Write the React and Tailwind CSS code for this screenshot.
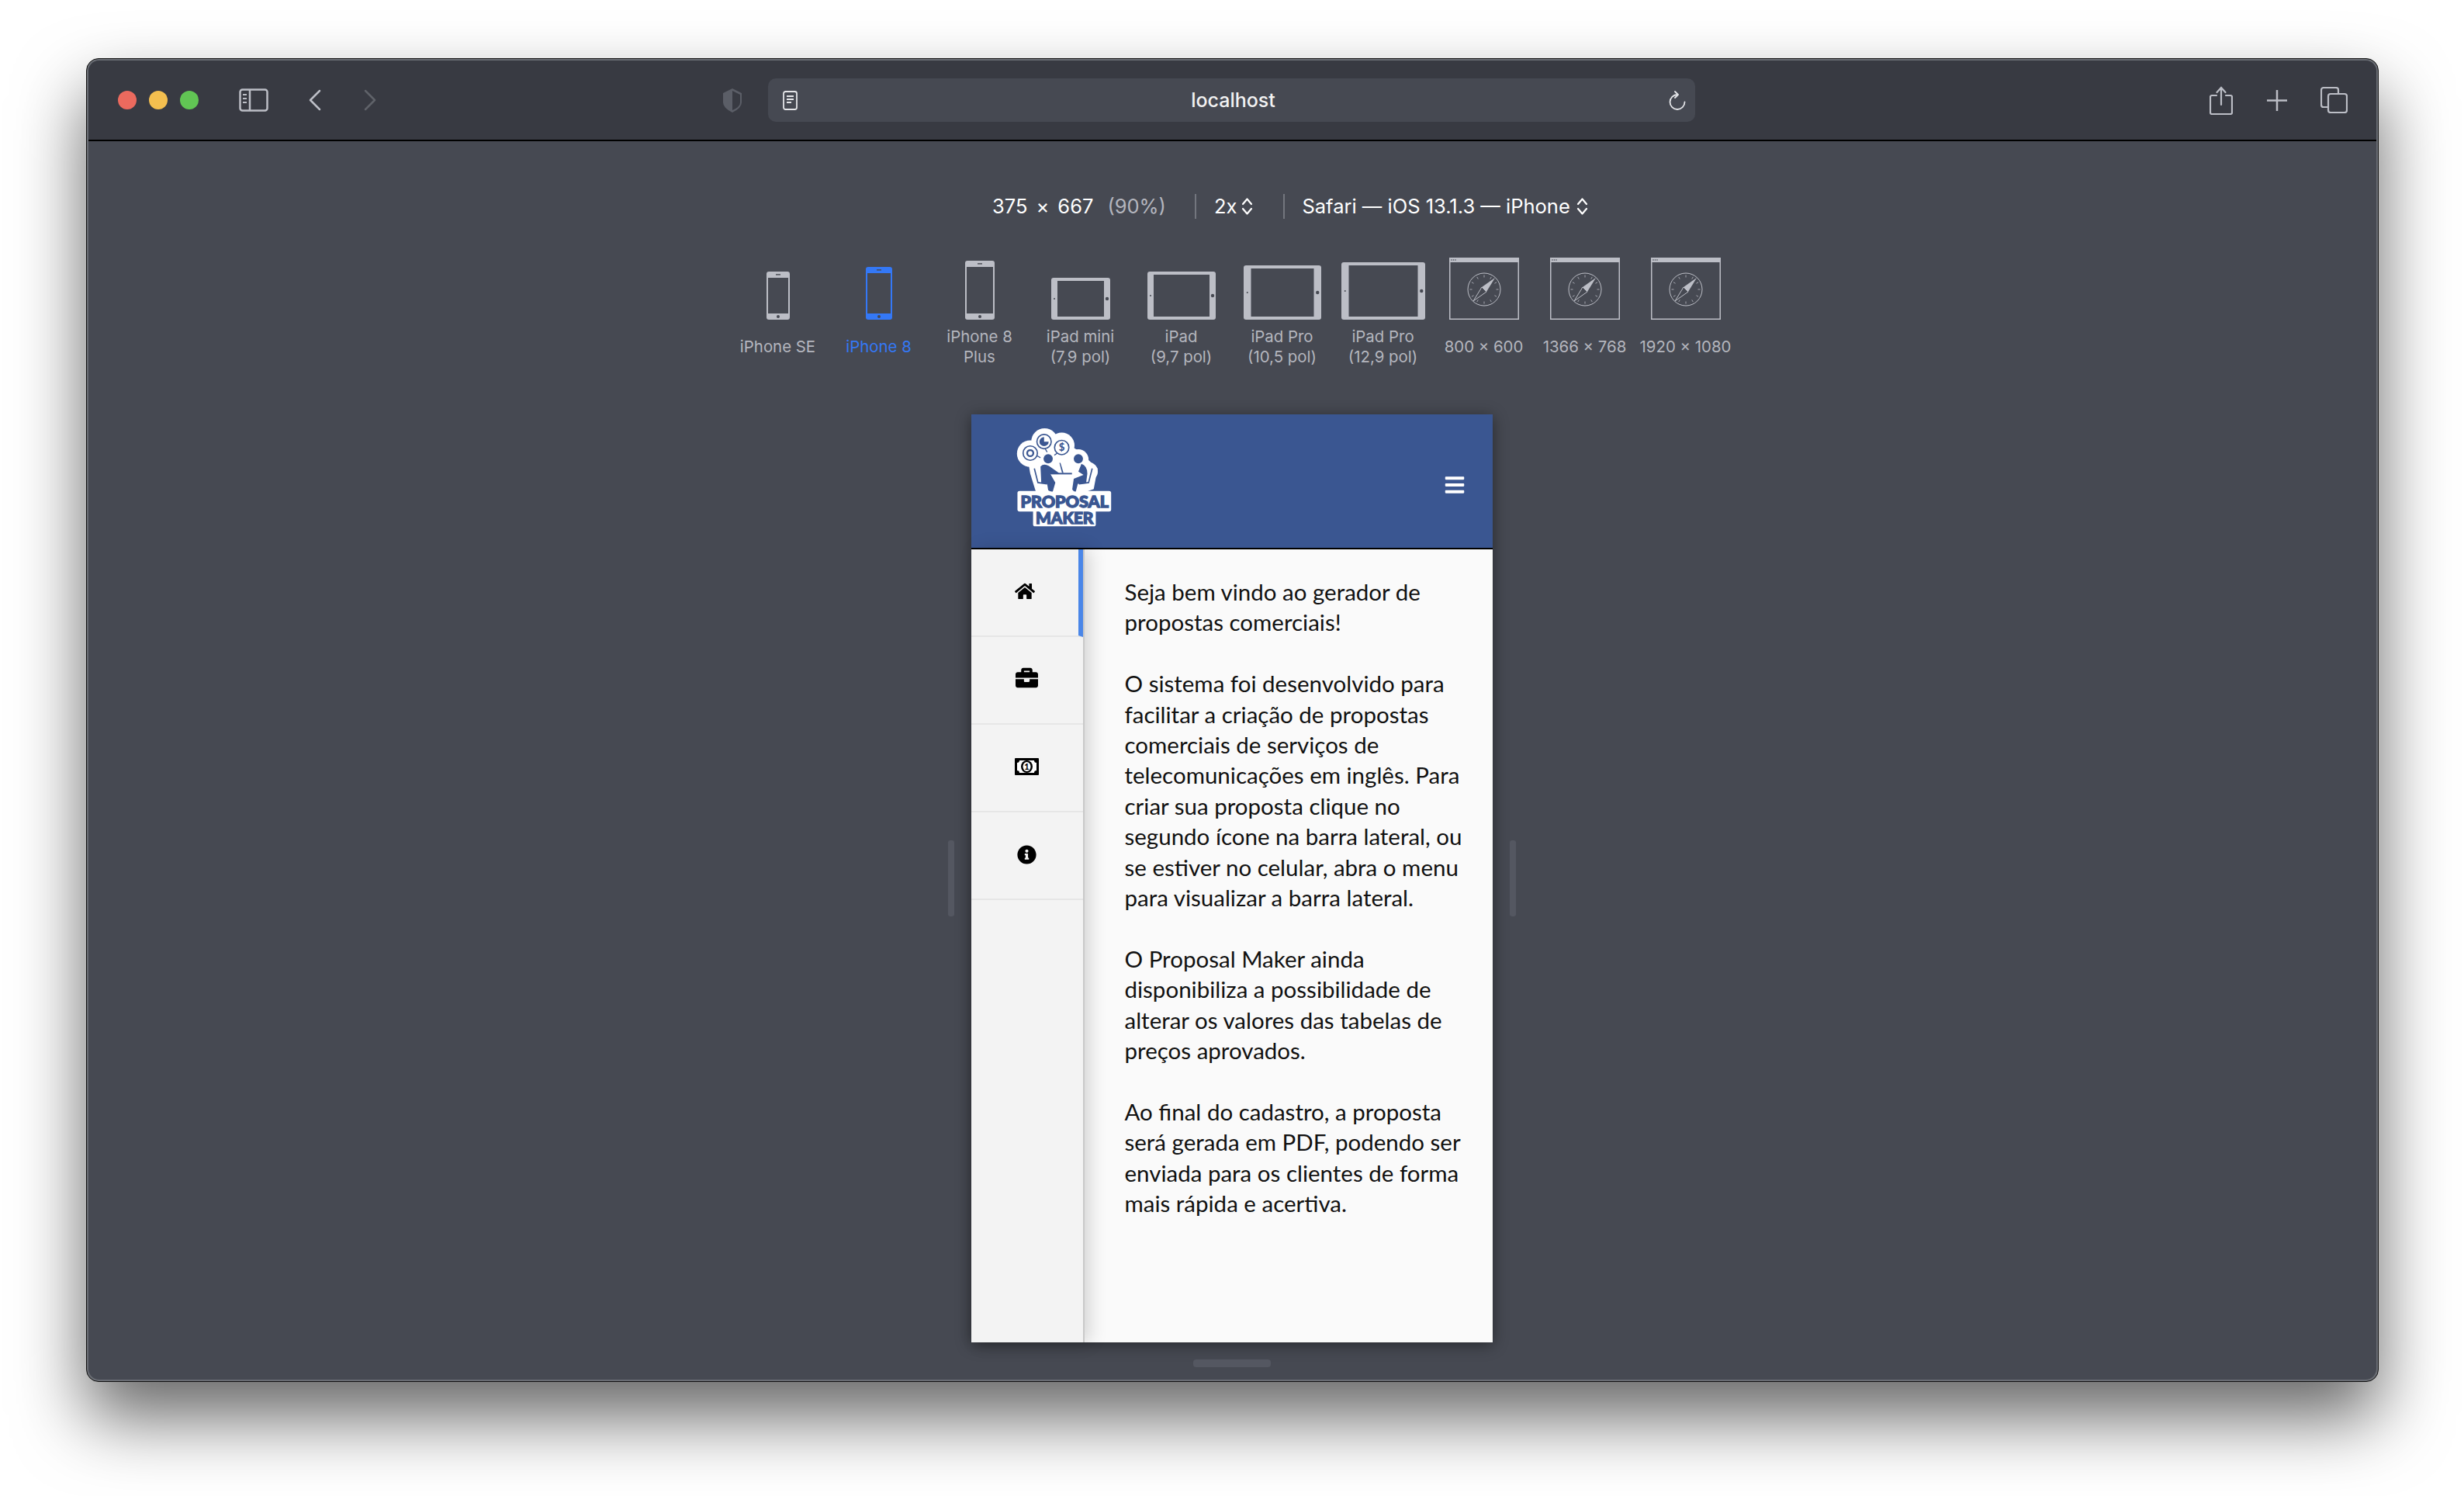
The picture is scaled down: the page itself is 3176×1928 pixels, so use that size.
import { FaHome, FaBriefcase, FaInfoCircle, FaBars } from "react-icons/fa";

const sf = "font-['Inter','Noto_Sans',sans-serif]";

const devices = [
  { name: ["iPhone SE"], kind: "phone", w: 30, h: 62, side: 2 },
  { name: ["iPhone 8"], kind: "phone", w: 34, h: 68, side: 2, active: true },
  { name: ["iPhone 8", "Plus"], kind: "phone", w: 38, h: 76, side: 2 },
  { name: ["iPad mini", "(7,9 pol)"], kind: "tablet", w: 76, h: 54, side: 8 },
  { name: ["iPad", "(9,7 pol)"], kind: "tablet", w: 88, h: 62, side: 8 },
  { name: ["iPad Pro", "(10,5 pol)"], kind: "tablet", w: 100, h: 70, side: 9.5 },
  { name: ["iPad Pro", "(12,9 pol)"], kind: "tablet", w: 108, h: 74, side: 9.5 },
  { name: ["800 × 600"], kind: "browser", w: 90, h: 80 },
  { name: ["1366 × 768"], kind: "browser", w: 90, h: 80 },
  { name: ["1920 × 1080"], kind: "browser", w: 90, h: 80 },
];

const paragraphs = [
  ["Seja bem vindo ao gerador de", "propostas comerciais!"],
  [
    "O sistema foi desenvolvido para",
    "facilitar a criação de propostas",
    "comerciais de serviços de",
    "telecomunicações em inglês. Para",
    "criar sua proposta clique no",
    "segundo ícone na barra lateral, ou",
    "se estiver no celular, abra o menu",
    "para visualizar a barra lateral.",
  ],
  [
    "O Proposal Maker ainda",
    "disponibiliza a possibilidade de",
    "alterar os valores das tabelas de",
    "preços aprovados.",
  ],
  [
    "Ao final do cadastro, a proposta",
    "será gerada em PDF, podendo ser",
    "enviada para os clientes de forma",
    "mais rápida e acertiva.",
  ],
];

const PhoneIcon = ({ w, h, side, color }) => (
  <svg width={w} height={h} viewBox={`0 0 ${w} ${h}`}>
    <rect width={w} height={h} rx="3" fill={color} />
    <rect x={side} y="8" width={w - side * 2} height={h - 16} fill="#464952" />
    <circle cx={w / 2} cy={h - 4} r="2" fill="#464952" />
    <rect x={w / 2 - 3} y="3.2" width="6" height="1.4" fill="#464952" />
  </svg>
);

const TabletIcon = ({ w, h, side, color }) => (
  <svg width={w} height={h} viewBox={`0 0 ${w} ${h}`}>
    <rect width={w} height={h} rx="3" fill={color} />
    <rect x={side} y="4" width={w - side * 2} height={h - 8} fill="#464952" />
    <circle cx={side / 2} cy={h / 2} r="1" fill="#464952" />
    <circle cx={w - side / 2} cy={h / 2} r="2.2" fill="#464952" />
  </svg>
);

const BrowserIcon = ({ color }) => {
  const ticks = [];
  for (let i = 0; i < 12; i++) {
    const a = (i * Math.PI) / 6;
    ticks.push(
      <line
        key={i}
        x1={45 + Math.cos(a) * 15.5}
        y1={41 + Math.sin(a) * 15.5}
        x2={45 + Math.cos(a) * 18.5}
        y2={41 + Math.sin(a) * 18.5}
        stroke={color}
        strokeWidth="0.8"
      />
    );
  }
  return (
    <svg width="90" height="80" viewBox="0 0 90 80">
      <rect x="0.75" y="0.75" width="88.5" height="78.5" fill="none" stroke={color} strokeWidth="1.5" />
      <rect width="90" height="6" fill={color} />
      <circle cx="3" cy="3" r="0.8" fill="#464952" />
      <circle cx="5.5" cy="3" r="0.8" fill="#464952" />
      <circle cx="8" cy="3" r="0.8" fill="#464952" />
      <circle cx="45" cy="41" r="21" fill="none" stroke={color} strokeWidth="1" />
      {ticks}
      <path d="M59 26 L48 44 L42 38 Z" fill={color} />
      <path d="M31 56 L42 38 L48 44 Z" fill="none" stroke={color} strokeWidth="1" />
    </svg>
  );
};

const DeviceItem = ({ device }) => {
  const color = device.active ? "#3478f6" : "#bcbec6";
  return (
    <div className="w-[130px] flex flex-col items-center">
      <div className="h-[80px] flex items-end">
        {device.kind === "phone" && <PhoneIcon {...device} color={color} />}
        {device.kind === "tablet" && <TabletIcon {...device} color={color} />}
        {device.kind === "browser" && <BrowserIcon color={color} />}
      </div>
      <div
        className={`h-[52px] mt-[9px] flex flex-col justify-center items-center text-[20.4px] leading-[26px] whitespace-nowrap ${
          device.active ? "text-[#3478f6]" : "text-[#b4b6be]"
        }`}
      >
        {device.name.map((line) => (
          <span key={line}>{line}</span>
        ))}
      </div>
    </div>
  );
};

const UpDown = () => (
  <svg width="15" height="24" viewBox="0 0 15 24" fill="none" stroke="#fff" strokeWidth="2.2" strokeLinecap="round" strokeLinejoin="round">
    <path d="M2 9 L7.5 2.5 L13 9" />
    <path d="M2 15 L7.5 21.5 L13 15" />
  </svg>
);

const MoneyIcon = () => (
  <svg width="31" height="22" viewBox="0 0 31 22">
    <rect width="31" height="22" rx="1" fill="#000" />
    <path d="M6 3 H25 Q25 6 28 6 V16 Q25 16 25 19 H6 Q6 16 3 16 V6 Q6 6 6 3 Z" fill="#fff" />
    <ellipse cx="15.5" cy="11" rx="7.5" ry="8" fill="#000" />
    <ellipse cx="15.5" cy="11" rx="5" ry="6" fill="#fff" />
    <text x="15.5" y="15" textAnchor="middle" fontSize="11" fontWeight="900" fill="#000" fontFamily="Lato">1</text>
  </svg>
);

const Logo = () => (
  <svg className="mb-[10px]" width="123" height="128" viewBox="208 90 372 388">
    {/* blob branco */}
    <g fill="#fff">
      <circle cx="262" cy="192" r="52" />
      <circle cx="318" cy="145" r="52" />
      <circle cx="385" cy="160" r="50" />
      <circle cx="450" cy="215" r="40" />
      <circle cx="490" cy="262" r="36" />
      <path d="M255 230 L400 150 L450 180 L525 250 L510 330 L470 345 L285 345 L262 270 Z" />
      <rect x="212" y="338" width="366" height="80" rx="8" />
      <rect x="273" y="410" width="245" height="66" rx="8" />
    </g>
    {/* balões */}
    <g fill="none" stroke="#3a5691">
      <circle cx="262" cy="190" r="28" strokeWidth="5" />
      <circle cx="262" cy="190" r="12" strokeWidth="7" />
      <circle cx="316" cy="145" r="28" strokeWidth="5" />
      <circle cx="385" cy="168" r="28" strokeWidth="5" />
      <path d="M288 200 L302 208 M320 172 L328 186 M368 190 L356 198" strokeWidth="4" />
    </g>
    <path d="M316 127 A18 18 0 1 0 334 145 L316 145 Z" fill="#3a5691" />
    <text x="385" y="182" textAnchor="middle" fontSize="40" fontWeight="900" fill="#3a5691" fontFamily="Lato">$</text>
    {/* pessoas */}
    <g fill="#3a5691">
      <circle cx="332" cy="212" r="18" />
      <circle cx="450" cy="212" r="18" />
      <path d="M302 242 Q315 228 335 240 L375 268 L340 270 L360 305 L350 340 Q340 342 332 335 L328 310 L305 305 Z" />
      <path d="M462 232 Q485 240 485 270 L480 308 L448 310 L440 340 Q432 342 426 332 L432 290 L470 275 L450 262 Z" />
      <rect x="340" y="267" width="85" height="6" />
      <path d="M376 228 L380 228 L392 267 L386 267 Z" />
    </g>
    <g fill="none" stroke="#3a5691" strokeWidth="5">
      <path d="M278 250 L292 305 L328 310" />
      <path d="M504 250 L490 305 L452 310" />
    </g>
    <text x="396" y="402" textAnchor="middle" textLength="344" lengthAdjust="spacingAndGlyphs" fontSize="62" fontWeight="900" fill="#3a5691" stroke="#3a5691" strokeWidth="4" fontFamily="Lato">PROPOSAL</text>
    <text x="396" y="465" textAnchor="middle" textLength="226" lengthAdjust="spacingAndGlyphs" fontSize="62" fontWeight="900" fill="#3a5691" stroke="#3a5691" strokeWidth="4" fontFamily="Lato">MAKER</text>
  </svg>
);

const SideItem = ({ children, active }) => (
  <div
    className={`h-[113px] shrink-0 flex items-center justify-center pb-[3px] border-b-2 border-[#e6e6e6] text-black ${
      active ? "border-r-[6px] border-r-[#4a86e8]" : ""
    }`}
  >
    {children}
  </div>
);

const Handle = () => <div className="w-[8px] h-[98px] rounded-[3px] bg-[#545761]" />;

export default function App() {
  return (
    <div className={`w-[3176px] h-[1928px] bg-white overflow-hidden pt-[75px] pl-[111px] ${sf}`}>
      <div className="w-[2955px] h-[1706px] rounded-[16px] border border-[#111] bg-[#696c73] p-[2px] shadow-[0_46px_90px_rgba(0,0,0,0.6)]">
        <div className="w-full h-full rounded-[14px] overflow-hidden flex flex-col bg-[#464952]">
          {/* barra do navegador */}
          <div className="h-[104px] shrink-0 flex items-center bg-[#383a42] border-b-2 border-black text-[#bcbec6]">
            <div className="flex gap-[16px] ml-[38px]">
              <div className="w-[24px] h-[24px] rounded-full bg-[#ec6a5e]" />
              <div className="w-[24px] h-[24px] rounded-full bg-[#f4bf4f]" />
              <div className="w-[24px] h-[24px] rounded-full bg-[#61c554]" />
            </div>
            <svg className="ml-[52px]" width="38" height="30" viewBox="0 0 38 30" fill="none" stroke="#bcbec6" strokeWidth="2.5">
              <rect x="1.5" y="1.5" width="35" height="27" rx="3" />
              <path d="M14 1.5 V28.5" />
              <path d="M5 8 H10 M5 13 H10 M5 18 H10" strokeWidth="1.8" />
            </svg>
            <svg className="ml-[52px]" width="16" height="28" viewBox="0 0 16 28" fill="none" stroke="#bcbec6" strokeWidth="2.5" strokeLinecap="round" strokeLinejoin="round">
              <path d="M14 2 L2 14 L14 26" />
            </svg>
            <svg className="ml-[55px]" width="16" height="28" viewBox="0 0 16 28" fill="none" stroke="#5f6269" strokeWidth="2.5" strokeLinecap="round" strokeLinejoin="round">
              <path d="M2 2 L14 14 L2 26" />
            </svg>
            <svg className="ml-[446px]" width="26" height="33" viewBox="0 0 26 33">
              <path d="M13 1 L25 7 V19 Q25 26 13 32 Q1 26 1 19 V7 Z" fill="#5b5e67" />
              <path d="M13 4 L23 9 V19 Q23 25 13 29 Z" fill="#383a42" />
            </svg>
            <div className="ml-[33px] w-[1195px] h-[56px] rounded-[10px] bg-[#464952] flex items-center justify-between pl-[19px] pr-[12px] text-[#fff]">
              <svg width="19" height="25" viewBox="0 0 19 25" fill="none" stroke="#e4e5e8" strokeWidth="1.8">
                <rect x="1" y="1" width="17" height="23" rx="2.5" />
                <path d="M5 7 H14 M5 11 H14 M5 15 H11" />
              </svg>
              <span className="text-[25px] font-medium text-[#f2f2f2] mt-[2px]">localhost</span>
              <svg width="22" height="25" viewBox="0 0 22 25" fill="none" stroke="#e4e5e8" strokeWidth="1.8" strokeLinecap="round" strokeLinejoin="round">
                <path d="M11 5 A9.5 9.5 0 1 0 20.5 14.5" />
                <path d="M8 1 L12 5 L8 9" />
              </svg>
            </div>
            <svg className="ml-[663px]" width="30" height="37" viewBox="0 0 30 37" fill="none" stroke="#bcbec6" strokeWidth="2.2" strokeLinecap="round">
              <path d="M9 12 H3 A2 2 0 0 0 1 14 V34 A2 2 0 0 0 3 36 H27 A2 2 0 0 0 29 34 V14 A2 2 0 0 0 27 12 H21" />
              <path d="M15 24 V2 M9.5 8 L15 2 L20.5 8" />
            </svg>
            <svg className="ml-[44px]" width="26" height="27" viewBox="0 0 26 27" fill="none" stroke="#bcbec6" strokeWidth="2.5">
              <path d="M13 0 V27 M0 13.5 H26" />
            </svg>
            <svg className="ml-[43px]" width="35" height="34" viewBox="0 0 35 34" fill="none" stroke="#bcbec6" strokeWidth="2.2">
              <path d="M9 26 H4 A3 3 0 0 1 1 23 V4 A3 3 0 0 1 4 1 H20 A3 3 0 0 1 23 4 V9" />
              <rect x="10" y="9" width="24" height="24" rx="3" />
            </svg>
          </div>

          {/* cabeçalho do modo responsivo */}
          <div className="mt-[68px] h-[32px] flex items-center pl-[1165px] text-[25.5px] text-white whitespace-nowrap">
            <span>375</span>
            <span className="mx-[11px]">×</span>
            <span>667</span>
            <span className="ml-[18px] text-[#b4b6be]">(90%)</span>
            <div className="ml-[37px] w-[2px] h-[32px] bg-[#73767e]" />
            <span className="ml-[23px]">2x</span>
            <span className="ml-[6px]"><UpDown /></span>
            <div className="ml-[39px] w-[2px] h-[32px] bg-[#73767e]" />
            <span className="ml-[22px]">Safari — iOS 13.1.3 — iPhone</span>
            <span className="ml-[8px]"><UpDown /></span>
          </div>

          <div className="mt-[50px] flex justify-center pr-[2px]">
            {devices.map((device) => (
              <DeviceItem key={device.name.join(" ")} device={device} />
            ))}
          </div>

          {/* iPhone simulado */}
          <div className="mt-[61px] flex items-center justify-center gap-[22px] pr-[2px]">
            <Handle />
            <div className="w-[672px] h-[1196px] flex flex-col bg-[#fafafa] shadow-[0_3px_18px_rgba(0,0,0,0.45)] font-['Lato','Noto_Sans',sans-serif]">
              <div className="h-[174px] shrink-0 flex items-center justify-between pl-[58px] pr-[35px] bg-[#3a5691] border-b-2 border-black">
                <Logo />
                <FaBars className="text-white w-[28px] h-[28px] mt-[10px]" />
              </div>
              <div className="flex-1 flex min-h-0">
                <div className="relative z-10 w-[144px] shrink-0 flex flex-col bg-[#f3f3f3] shadow-[2px_0_0_#c9c9c9,8px_0_22px_rgba(0,0,0,0.16)]">
                  <SideItem active><FaHome className="w-[26px] h-[26px]" /></SideItem>
                  <SideItem><FaBriefcase className="w-[29px] h-[29px] -mt-[3px]" /></SideItem>
                  <SideItem><MoneyIcon /></SideItem>
                  <SideItem><FaInfoCircle className="w-[25px] h-[25px]" /></SideItem>
                </div>
                <div className="flex-1 pl-[54px] pt-[35px] text-[29.5px] leading-[39.4px] text-[#111] whitespace-nowrap">
                  {paragraphs.map((lines, i) => (
                    <p key={i} className="mb-[39.4px]">
                      {lines.map((line) => (
                        <span key={line} className="block">{line}</span>
                      ))}
                    </p>
                  ))}
                </div>
              </div>
            </div>
            <Handle />
          </div>

          <div className="mt-[22px] flex justify-center pr-[2px]">
            <div className="w-[100px] h-[10px] rounded-[4px] bg-[#545761]" />
          </div>
        </div>
      </div>
    </div>
  );
}
